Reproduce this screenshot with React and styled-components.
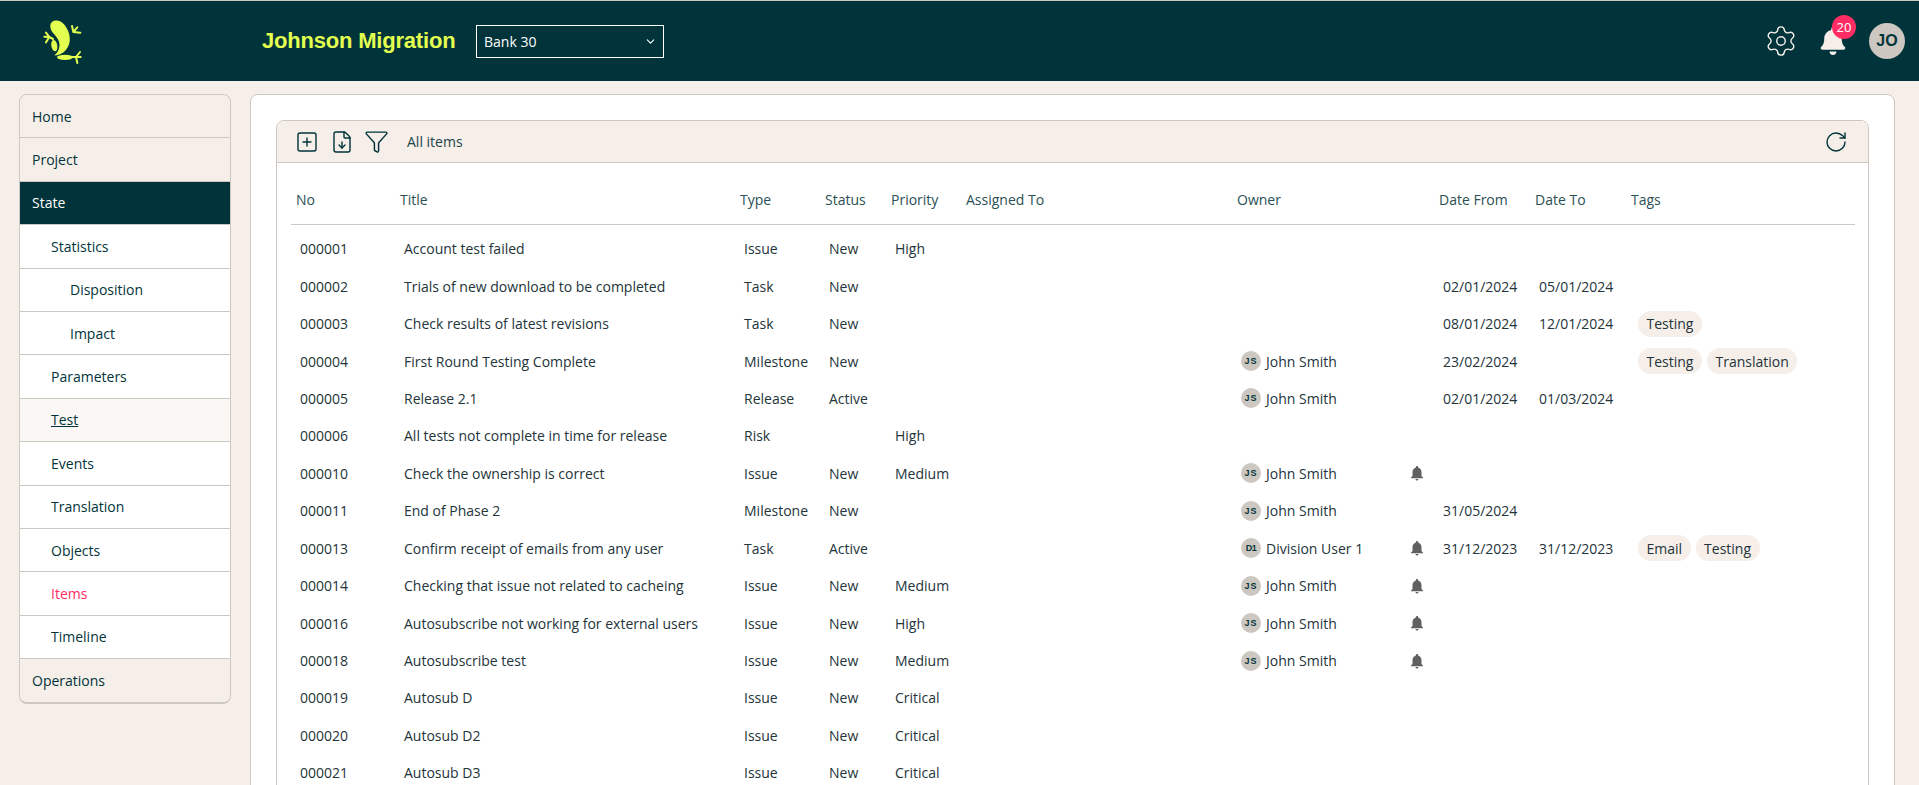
import React from 'react';
import styled, { createGlobalStyle } from 'styled-components';
import { Settings, SquarePlus, FileDown, Funnel, RotateCw, ChevronDown } from 'lucide-react';
import { FaBell } from 'react-icons/fa';
import { MdNotifications } from 'react-icons/md';

const dark = '#01343a';
const cream = '#f5eee9';
const line = '#cdc7c1';
const lime = '#e3ff4f';
const pink = '#ff2d63';

const GlobalStyle = createGlobalStyle`
  html, body {
    margin: 0;
    height: 100%;
    overflow: hidden;
    background: ${cream};
    font-family: "Open Sans", "Noto Sans", sans-serif;
    font-size: 14px;
  }
  * { box-sizing: border-box; }
`;

const Page = styled.div`
  height: 785px;
  overflow: hidden;
  display: flex;
  flex-direction: column;
`;

const HeaderBar = styled.header`
  height: 81px;
  flex: none;
  display: flex;
  align-items: center;
  background: ${dark};
  border-top: 1px solid #c9c9c4;
  padding-left: 20px;
  padding-right: 14px;
`;

const LogoBox = styled.div`
  width: 242px;
  height: 80px;
`;

const AppTitle = styled.h1`
  margin: 0;
  font-family: "Liberation Sans", sans-serif;
  font-size: 22px;
  font-weight: 700;
  letter-spacing: -0.2px;
  color: ${lime};
  width: 214px;
`;

const BankSelect = styled.div`
  width: 188px;
  height: 33px;
  border: 1px solid #fff;
  color: #fff;
  display: flex;
  align-items: center;
  justify-content: space-between;
  padding: 0 6px 0 7px;
`;

const HeaderRight = styled.div`
  margin-left: auto;
  display: flex;
  align-items: center;
`;

const GearIcon = styled(Settings)`
  color: ${cream};
  margin-right: 21px;
`;

const BellWrap = styled.div`
  position: relative;
  width: 28px;
  height: 28px;
  margin-right: 22px;
  color: ${cream};
`;

const Badge = styled.span`
  position: absolute;
  top: -12px;
  left: 13px;
  width: 24px;
  height: 24px;
  border-radius: 50%;
  background: ${pink};
  color: #fff;
  font-size: 13px;
  display: flex;
  align-items: center;
  justify-content: center;
`;

const HeaderAvatar = styled.div`
  width: 36px;
  height: 36px;
  border-radius: 50%;
  background: ${line};
  color: ${dark};
  font-family: "Liberation Sans", sans-serif;
  font-weight: 700;
  font-size: 16px;
  display: flex;
  align-items: center;
  justify-content: center;
`;

const Body = styled.div`
  flex: 1;
  display: flex;
  align-items: flex-start;
  padding: 13px 24px 0 19px;
  gap: 19px;
  min-height: 0;
`;

const SideNav = styled.nav`
  width: 212px;
  flex: none;
  border: 1px solid ${line};
  border-bottom-width: 2px;
  border-radius: 8px;
  overflow: hidden;
`;

const NavRow = styled.div`
  height: 43.4px;
  display: flex;
  align-items: center;
  padding-left: ${p => 12 + p.$level * 19}px;
  color: ${p => (p.$current ? '#fff' : p.$pink ? pink : dark)};
  background: ${p => (p.$current ? dark : p.$soft ? '#faf7f4' : p.$level === 0 ? cream : '#fff')};
  text-decoration: ${p => (p.$soft ? 'underline' : 'none')};
  border-bottom: 1px solid ${line};
  &:last-child { border-bottom: 0; }
`;

const MainPanel = styled.main`
  flex: 1;
  min-width: 0;
  height: 720px;
  background: #fff;
  border: 1px solid ${line};
  border-radius: 8px;
  padding: 25px 25px 0 25px;
`;

const ItemsCard = styled.section`
  border: 1px solid ${line};
  border-radius: 8px;
  height: 700px;
`;

const Toolbar = styled.div`
  height: 42px;
  background: ${cream};
  border-bottom: 1px solid ${line};
  border-radius: 8px 8px 0 0;
  display: flex;
  align-items: center;
  padding: 0 18px;
  color: ${dark};
`;

const ToolIcon = styled.span`
  display: flex;
  margin-right: ${p => p.$gap}px;
`;

const ToolLabel = styled.span`
  color: #20454a;
`;

const RefreshBtn = styled.span`
  margin-left: auto;
  display: flex;
  margin-right: 2px;
`;

const Table = styled.div`
  padding: 0 13px 0 14px;
`;

const columns = '104px 340px 85px 66px 75px 271px 202px 96px 96px 1fr';

const HeadRow = styled.div`
  display: grid;
  grid-template-columns: ${columns};
  align-items: center;
  height: 62px;
  padding-top: 11px;
  border-bottom: 1px solid ${line};
  margin-bottom: 5px;
  color: #2b5055;
`;

const HeadCell = styled.div`
  padding-left: 5px;
`;

const Row = styled.div`
  display: grid;
  grid-template-columns: ${columns};
  align-items: center;
  height: 37.45px;
  color: #23343a;
`;

const Cell = styled.div`
  padding-left: 9px;
  white-space: nowrap;
`;

const OwnerCell = styled(Cell)`
  display: flex;
  align-items: center;
`;

const MiniAvatar = styled.span`
  width: 20px;
  height: 20px;
  border-radius: 50%;
  background: ${line};
  color: ${dark};
  font-family: "Liberation Sans", sans-serif;
  font-size: 9px;
  font-weight: 700;
  letter-spacing: ${p => (p.$tight ? '-0.5px' : '1px')};
  display: flex;
  align-items: center;
  justify-content: center;
  margin-right: 5px;
  flex: none;
`;

const OwnerName = styled.span`
  width: 142px;
`;

const SmallBell = styled(MdNotifications)`
  color: #62605f;
  flex: none;
`;

const TagCell = styled(Cell)`
  display: flex;
  gap: 5px;
  padding-left: 12px;
`;

const Tag = styled.span`
  height: 26px;
  padding: 0 8.5px;
  border-radius: 13px;
  background: ${cream};
  display: flex;
  align-items: center;
`;

const navItems = [
  { label: 'Home', level: 0 },
  { label: 'Project', level: 0 },
  { label: 'State', level: 0, current: true },
  { label: 'Statistics', level: 1 },
  { label: 'Disposition', level: 2 },
  { label: 'Impact', level: 2 },
  { label: 'Parameters', level: 1 },
  { label: 'Test', level: 1, soft: true },
  { label: 'Events', level: 1 },
  { label: 'Translation', level: 1 },
  { label: 'Objects', level: 1 },
  { label: 'Items', level: 1, pink: true },
  { label: 'Timeline', level: 1 },
  { label: 'Operations', level: 0 },
];

const heads = ['No', 'Title', 'Type', 'Status', 'Priority', 'Assigned To', 'Owner', 'Date From', 'Date To', 'Tags'];

const js = 'John Smith';

const items = [
  { no: '000001', title: 'Account test failed', type: 'Issue', status: 'New', priority: 'High' },
  { no: '000002', title: 'Trials of new download to be completed', type: 'Task', status: 'New', from: '02/01/2024', to: '05/01/2024' },
  { no: '000003', title: 'Check results of latest revisions', type: 'Task', status: 'New', from: '08/01/2024', to: '12/01/2024', tags: ['Testing'] },
  { no: '000004', title: 'First Round Testing Complete', type: 'Milestone', status: 'New', owner: js, from: '23/02/2024', tags: ['Testing', 'Translation'] },
  { no: '000005', title: 'Release 2.1', type: 'Release', status: 'Active', owner: js, from: '02/01/2024', to: '01/03/2024' },
  { no: '000006', title: 'All tests not complete in time for release', type: 'Risk', priority: 'High' },
  { no: '000010', title: 'Check the ownership is correct', type: 'Issue', status: 'New', priority: 'Medium', owner: js, bell: true },
  { no: '000011', title: 'End of Phase 2', type: 'Milestone', status: 'New', owner: js, from: '31/05/2024' },
  { no: '000013', title: 'Confirm receipt of emails from any user', type: 'Task', status: 'Active', owner: 'Division User 1', initials: 'D1', bell: true, from: '31/12/2023', to: '31/12/2023', tags: ['Email', 'Testing'] },
  { no: '000014', title: 'Checking that issue not related to cacheing', type: 'Issue', status: 'New', priority: 'Medium', owner: js, bell: true },
  { no: '000016', title: 'Autosubscribe not working for external users', type: 'Issue', status: 'New', priority: 'High', owner: js, bell: true },
  { no: '000018', title: 'Autosubscribe test', type: 'Issue', status: 'New', priority: 'Medium', owner: js, bell: true },
  { no: '000019', title: 'Autosub D', type: 'Issue', status: 'New', priority: 'Critical' },
  { no: '000020', title: 'Autosub D2', type: 'Issue', status: 'New', priority: 'Critical' },
  { no: '000021', title: 'Autosub D3', type: 'Issue', status: 'New', priority: 'Critical' },
];

function FrogLogo() {
  return (
    <svg width="80" height="80" viewBox="0 0 240 240" fill={lime}>
      <path d="M91 74C92 56 118 52 134 72C151 95 157 125 137 148C127 159 112 165 103 163C119 150 123 130 113 113C103 98 90 90 91 74Z" />
      <ellipse cx="103" cy="134" rx="9" ry="17" transform="rotate(-10 103 134)" />
      <ellipse cx="135" cy="169" rx="24" ry="8" />
      <g stroke={lime} strokeWidth="6" strokeLinecap="round" fill="none">
        <path d="M99 114L88 108M88 108L78 95M88 108L73 107M88 108L78 124" />
        <path d="M160 93L156 75M160 93L172 79M160 93L181 95" />
        <path d="M158 168L168 168M168 168L180 153M168 168L182 168M168 168L172 186" />
      </g>
    </svg>
  );
}

export default function App() {
  return (
    <Page>
      <GlobalStyle />
      <HeaderBar>
        <LogoBox><FrogLogo /></LogoBox>
        <AppTitle>Johnson Migration</AppTitle>
        <BankSelect>
          Bank 30
          <ChevronDown size={13} />
        </BankSelect>
        <HeaderRight>
          <GearIcon size={34} strokeWidth={1} />
          <BellWrap>
            <FaBell size={28} />
            <Badge>20</Badge>
          </BellWrap>
          <HeaderAvatar>JO</HeaderAvatar>
        </HeaderRight>
      </HeaderBar>
      <Body>
        <SideNav>
          {navItems.map(n => (
            <NavRow key={n.label} $level={n.level} $current={n.current} $soft={n.soft} $pink={n.pink}>
              {n.label}
            </NavRow>
          ))}
        </SideNav>
        <MainPanel>
          <ItemsCard>
            <Toolbar>
              <ToolIcon $gap={11}><SquarePlus size={24} strokeWidth={1.4} /></ToolIcon>
              <ToolIcon $gap={10}><FileDown size={24} strokeWidth={1.4} /></ToolIcon>
              <ToolIcon $gap={18}><Funnel size={25} strokeWidth={1.4} /></ToolIcon>
              <ToolLabel>All items</ToolLabel>
              <RefreshBtn><RotateCw size={24} strokeWidth={1.4} /></RefreshBtn>
            </Toolbar>
            <Table>
              <HeadRow>
                {heads.map(h => <HeadCell key={h}>{h}</HeadCell>)}
              </HeadRow>
              {items.map(it => (
                <Row key={it.no}>
                  <Cell>{it.no}</Cell>
                  <Cell>{it.title}</Cell>
                  <Cell>{it.type}</Cell>
                  <Cell>{it.status}</Cell>
                  <Cell>{it.priority}</Cell>
                  <Cell />
                  <OwnerCell>
                    {it.owner && (
                      <>
                        <MiniAvatar $tight={!!it.initials}>{it.initials || 'JS'}</MiniAvatar>
                        <OwnerName>{it.owner}</OwnerName>
                      </>
                    )}
                    {it.bell && <SmallBell size={18} />}
                  </OwnerCell>
                  <Cell>{it.from}</Cell>
                  <Cell>{it.to}</Cell>
                  <TagCell>
                    {it.tags && it.tags.map(t => <Tag key={t}>{t}</Tag>)}
                  </TagCell>
                </Row>
              ))}
            </Table>
          </ItemsCard>
        </MainPanel>
      </Body>
    </Page>
  );
}
